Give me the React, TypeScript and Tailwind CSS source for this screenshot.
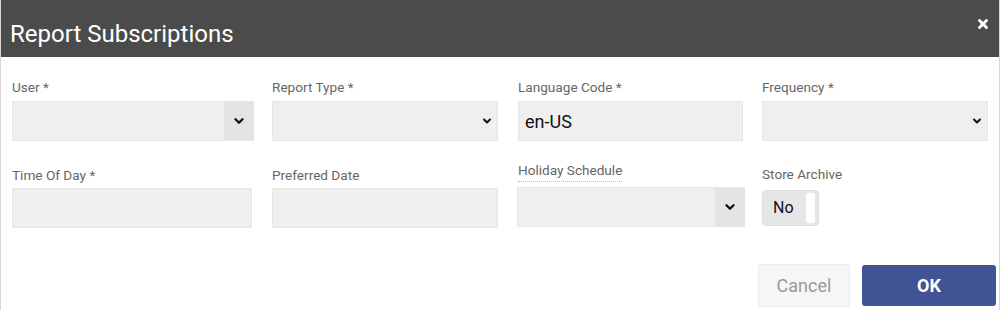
import { ChevronDown, X } from "lucide-react";

const label = "block text-[13.6px] leading-[16px] text-[#666]";
const field = "h-[40px] bg-[#efefef] border border-[#e6e6e6]";

function Chevron({ size = 14 }: { size?: number }) {
  return <ChevronDown size={size} strokeWidth={4} className="text-[#111]" />;
}

export default function App() {
  return (
    <div
      className="w-[1000px] h-[310px] bg-white border-x border-[#d6d6d6] overflow-hidden"
      style={{ fontFamily: "Roboto, 'Liberation Sans', sans-serif" }}
    >
      <div className="h-[57px] bg-[#4b4b4b] flex items-center justify-between pl-[9px] pr-[9px]">
        <h1 className="text-[24px] text-white pt-[10px]">Report Subscriptions</h1>
        <X size={14} strokeWidth={5} className="text-white -mt-[10px]" />
      </div>

      <div className="grid grid-cols-[260px_246px_244px_1fr] pl-[11px] pt-[22px]">
        {/* row 1 */}
        <div>
          <span className={label}>User *</span>
          <div className={`${field} mt-[6px] w-[242px] flex justify-end`}>
            <div className="w-[29px] h-full bg-[#e4e4e4] flex items-center justify-center">
              <Chevron />
            </div>
          </div>
        </div>
        <div>
          <span className={label}>Report Type *</span>
          <div className={`${field} mt-[6px] w-[226px] flex items-center justify-end pr-[4px]`}>
            <Chevron size={12} />
          </div>
        </div>
        <div>
          <span className={label}>Language Code *</span>
          <div className={`${field} mt-[6px] w-[225px] flex items-center pl-[6px] text-[18px] text-[#111]`}>
            en-US
          </div>
        </div>
        <div>
          <span className={label}>Frequency *</span>
          <div className={`${field} mt-[6px] w-[226px] flex items-center justify-end pr-[4px]`}>
            <Chevron size={12} />
          </div>
        </div>

        {/* row 2 */}
        <div className="pt-[26px]">
          <span className={label}>Time Of Day *</span>
          <div className={`${field} mt-[5px] w-[240px]`} />
        </div>
        <div className="pt-[26px]">
          <span className={label}>Preferred Date</span>
          <div className={`${field} mt-[5px] w-[226px]`} />
        </div>
        <div className="pt-[21px] -ml-[1px] flex flex-col items-start">
          <span className={`${label} pb-[3px] border-b border-dotted border-[#bbb] ml-[1px]`}>
            Holiday Schedule
          </span>
          <div className={`${field} mt-[5px] w-[228px] flex justify-end`}>
            <div className="w-[29px] h-full bg-[#e4e4e4] flex items-center justify-center">
              <Chevron />
            </div>
          </div>
        </div>
        <div className="pt-[25px]">
          <span className={label}>Store Archive</span>
          <div className="mt-[8px] w-[57px] h-[36px] rounded-[4px] bg-[#e6e6e6] border border-[#dedede] flex items-center justify-between pl-[10px] pr-[3px]">
            <span className="text-[16px] text-[#111]">No</span>
            <span className="w-[9px] h-[30px] bg-white rounded-[2px]" />
          </div>
        </div>
      </div>

      <div className="flex justify-end gap-[12px] pr-[3px] pt-[36px]">
        <button className="w-[92px] h-[43px] bg-[#f6f6f6] border border-[#ececec] rounded-[3px] text-[18px] text-[#9a9a9a]">
          Cancel
        </button>
        <button className="w-[134px] h-[41px] mt-[1px] bg-[#3f5395] rounded-[3px] text-[18px] font-bold text-white">
          OK
        </button>
      </div>
    </div>
  );
}
